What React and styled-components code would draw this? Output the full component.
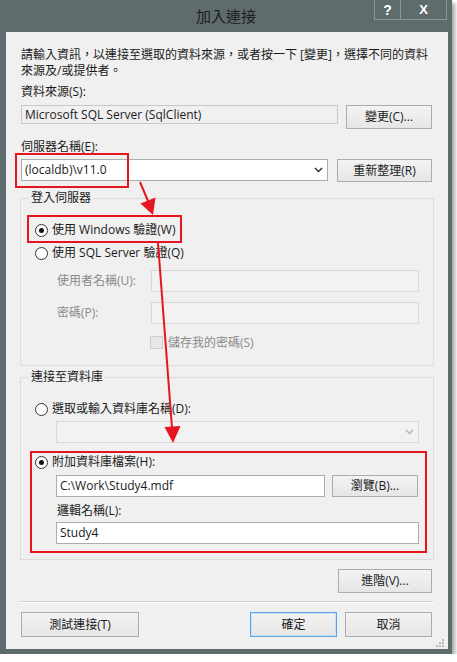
import React from 'react';
import styled, { createGlobalStyle } from 'styled-components';

const Global = createGlobalStyle`
  html, body { margin: 0; padding: 0; background: #ffffff; }
  body {
    font-family: "Open Sans", "Noto Sans CJK TC", sans-serif;
    font-size: 12px;
    color: #1b1b1b;
  }
  * { box-sizing: border-box; }
`;

const Window = styled.div`
  position: relative;
  width: 452px;
  height: 654px;
  background: #5f6c6e;
  box-shadow: 3px 3px 4px rgba(0, 0, 0, 0.35);
  display: flex;
  flex-direction: column;
`;

const TitleBar = styled.div`
  height: 32px;
  padding: 0 5px;
  display: grid;
  grid-template-columns: 1fr auto 1fr;
  align-items: start;
`;

const Title = styled.div`
  grid-column: 2;
  font-size: 15px;
  line-height: 32px;
  color: #1e1e1e;
`;

const Caption = styled.div`
  grid-column: 3;
  justify-self: end;
  display: flex;
`;

const CaptionButton = styled.div`
  width: ${p => p.$w}px;
  height: 20px;
  margin-left: ${p => (p.$first ? 0 : -1)}px;
  border: 1px solid #8a9698;
  border-top: none;
  display: flex;
  align-items: center;
  justify-content: center;
  color: #ffffff;
  font-family: "Liberation Sans", sans-serif;
  font-weight: bold;
  font-size: ${p => p.$fs}px;
`;

const Client = styled.div`
  position: relative;
  flex: 1;
  margin: 0 4px 5px 6px;
  background: #f0f0f0;
  padding: 15px 15px 0 15px;
  display: flex;
  flex-direction: column;
`;

const Intro = styled.div`
  line-height: 16px;
`;

const Label = styled.div`
  margin-top: ${p => p.$mt ?? 0}px;
  margin-left: ${p => p.$ml ?? 0}px;
  line-height: 16px;
  color: ${p => (p.$disabled ? '#8a8a8a' : '#1b1b1b')};
`;

const Row = styled.div`
  margin-top: ${p => p.$mt ?? 0}px;
  padding-left: ${p => p.$indent ?? 0}px;
  display: flex;
  align-items: ${p => p.$align || 'flex-start'};
  gap: ${p => p.$gap ?? 8}px;
`;

const TextBox = styled.div`
  flex: 1;
  min-width: 0;
  height: ${p => p.$h}px;
  border: 1px solid ${p => (p.$variant === 'disabled' ? '#d9d9d9' : p.$variant === 'readonly' ? '#c9c9c9' : '#abadb3')};
  background: ${p => (p.$variant === 'disabled' ? '#f2f2f2' : p.$variant === 'readonly' ? '#f0f0f0' : '#ffffff')};
  padding: 0 4px 0 3px;
  display: flex;
  align-items: center;
  justify-content: space-between;
  line-height: 16px;
  color: #1b1b1b;
  white-space: nowrap;
`;

const Chevron = ({ color }) => (
  <svg width="9" height="6" viewBox="0 0 9 6">
    <path d="M1 1 L4.5 4.5 L8 1" fill="none" stroke={color} strokeWidth="1.5" />
  </svg>
);

const Button = styled.div`
  width: ${p => p.$w}px;
  height: ${p => p.$h || 24}px;
  flex: none;
  border: 1px solid ${p => (p.$default ? '#5aa3e8' : '#acacac')};
  background: linear-gradient(#f3f3f3, #e6e6e6);
  box-shadow: ${p => (p.$default ? 'inset 0 0 0 1px #c9e2f8' : 'none')};
  display: flex;
  align-items: center;
  justify-content: center;
  line-height: 16px;
  color: #1b1b1b;
  margin-right: ${p => p.$mr ?? 0}px;
`;

const Group = styled.fieldset`
  margin: ${p => p.$mt}px -1px 0 -1px;
  padding: 0 14px 15px 14px;
  border: 1px solid #dcdcdc;
  min-width: 0;
  display: flex;
  flex-direction: column;
`;

const Legend = styled.legend`
  margin-left: -6px;
  padding: 0 2px;
  line-height: 16px;
  font-size: 12px;
  color: #1b1b1b;
`;

const RadioRow = styled.div`
  margin-top: ${p => p.$mt ?? 0}px;
  height: 16px;
  display: flex;
  align-items: center;
  gap: 4px;
  line-height: 16px;
`;

const RadioCircle = styled.span`
  width: 13px;
  height: 13px;
  flex: none;
  border-radius: 50%;
  border: 1px solid #333333;
  background: #ffffff;
  display: flex;
  align-items: center;
  justify-content: center;
  &::after {
    content: '';
    width: 5px;
    height: 5px;
    border-radius: 50%;
    background: ${p => (p.$checked ? '#111111' : 'transparent')};
  }
`;

const FieldLabel = styled.div`
  width: ${p => p.$w}px;
  flex: none;
  line-height: 16px;
  color: #8a8a8a;
`;

const CheckRow = styled.div`
  margin-top: ${p => p.$mt ?? 0}px;
  margin-left: ${p => p.$ml ?? 0}px;
  height: 16px;
  display: flex;
  align-items: center;
  gap: 5px;
  color: #8a8a8a;
`;

const CheckBox = styled.span`
  width: 13px;
  height: 13px;
  border: 1px solid #cfcfcf;
  background: #e8e8e8;
`;

const Separator = styled.div`
  margin: 8px -1px 0 -1px;
  border-top: 1px solid #d5d5d5;
  border-bottom: 1px solid #ffffff;
`;

const ButtonBar = styled.div`
  margin-top: 9px;
  display: flex;
  gap: 8px;
`;

const Spacer = styled.div`
  flex: 1;
`;

const AdvancedRow = styled.div`
  margin-top: 9px;
  display: flex;
  justify-content: flex-end;
`;

const Grip = styled.svg`
  position: absolute;
  right: 4px;
  bottom: 2px;
`;

const Annotations = styled.svg`
  position: absolute;
  left: 0;
  top: 0;
  pointer-events: none;
  overflow: visible;
`;

const RED = '#e5161f';

export default function App() {
  return (
    <>
      <Global />
      <Window>
        <TitleBar>
          <Title>加入連接</Title>
          <Caption>
            <CaptionButton $w={27} $fs={14} $first>?</CaptionButton>
            <CaptionButton $w={47} $fs={13}>X</CaptionButton>
          </Caption>
        </TitleBar>
        <Client>
          <Intro>
            請輸入資訊，以連接至選取的資料來源，或者按一下 [變更]，選擇不同的資料
            <br />
            來源及/或提供者。
          </Intro>
          <Label $mt={5}>資料來源(S):</Label>
          <Row $mt={5} $gap={8}>
            <TextBox $h={19} $variant="readonly">Microsoft SQL Server (SqlClient)</TextBox>
            <Button $w={86} $mr={1}>變更(C)...</Button>
          </Row>
          <Label $mt={10}>伺服器名稱(E):</Label>
          <Row $mt={4} $gap={9}>
            <TextBox $h={22}>
              <span>(localdb)\v11.0</span>
              <Chevron color="#333" />
            </TextBox>
            <Button $w={95} $h={23} $mr={1}>重新整理(R)</Button>
          </Row>

          <Group $mt={8}>
            <Legend>登入伺服器</Legend>
            <RadioRow $mt={16}>
              <RadioCircle $checked />
              <span>使用 Windows 驗證(W)</span>
            </RadioRow>
            <RadioRow $mt={7}>
              <RadioCircle />
              <span>使用 SQL Server 驗證(Q)</span>
            </RadioRow>
            <Row $mt={9} $indent={22} $gap={0} $align="center">
              <FieldLabel $w={94}>使用者名稱(U):</FieldLabel>
              <TextBox $h={22} $variant="disabled" />
            </Row>
            <Row $mt={10} $indent={22} $gap={0} $align="center">
              <FieldLabel $w={94}>密碼(P):</FieldLabel>
              <TextBox $h={22} $variant="disabled" />
            </Row>
            <CheckRow $mt={10} $ml={115}>
              <CheckBox />
              <span>儲存我的密碼(S)</span>
            </CheckRow>
          </Group>

          <Group $mt={3}>
            <Legend>連接至資料庫</Legend>
            <RadioRow $mt={16}>
              <RadioCircle />
              <span>選取或輸入資料庫名稱(D):</span>
            </RadioRow>
            <Row $mt={4} $indent={21}>
              <TextBox $h={22} $variant="disabled">
                <span />
                <Chevron color="#b5b5b5" />
              </TextBox>
            </Row>
            <RadioRow $mt={11}>
              <RadioCircle $checked />
              <span>附加資料庫檔案(H):</span>
            </RadioRow>
            <Row $mt={5} $indent={21} $gap={7}>
              <TextBox $h={22}>C:\Work\Study4.mdf</TextBox>
              <Button $w={86} $h={22} $mr={1}>瀏覽(B)...</Button>
            </Row>
            <Label $mt={6} $ml={22}>邏輯名稱(L):</Label>
            <Row $mt={3} $indent={21}>
              <TextBox $h={22}>Study4</TextBox>
            </Row>
          </Group>

          <AdvancedRow>
            <Button $w={94} $mr={1}>進階(V)...</Button>
          </AdvancedRow>
          <Separator />
          <ButtonBar>
            <Button $w={118} $h={25}>測試連接(T)</Button>
            <Spacer />
            <Button $w={87} $h={25} $default>確定</Button>
            <Button $w={87} $h={25} $mr={1}>取消</Button>
          </ButtonBar>

          <Grip width="8" height="8" viewBox="0 0 8 8">
            <g fill="#b8b8b8">
              <rect x="6" y="0" width="2" height="2" />
              <rect x="3" y="3" width="2" height="2" />
              <rect x="6" y="3" width="2" height="2" />
              <rect x="0" y="6" width="2" height="2" />
              <rect x="3" y="6" width="2" height="2" />
              <rect x="6" y="6" width="2" height="2" />
            </g>
          </Grip>
        </Client>

        <Annotations width="457" height="662" viewBox="0 0 457 662">
          <g fill="none" stroke={RED} strokeWidth="2">
            <rect x="16" y="154" width="112" height="33" />
            <rect x="28" y="216" width="153" height="26" />
            <rect x="31" y="452" width="395" height="100" />
            <line x1="140" y1="182" x2="148" y2="201" />
            <line x1="158" y1="243" x2="172" y2="428" />
          </g>
          <g fill={RED}>
            <polygon points="153,215 155.5,197.5 140.5,203.5" />
            <polygon points="173,443 180.5,426 164.5,427" />
          </g>
        </Annotations>
      </Window>
    </>
  );
}
